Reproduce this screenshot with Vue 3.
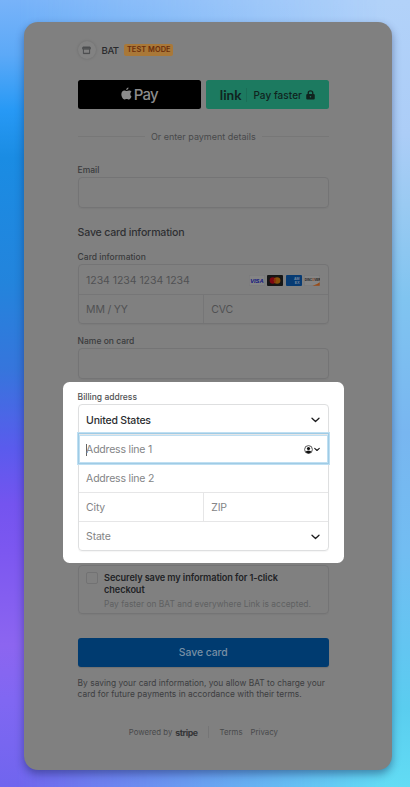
<script setup>
const cards = ['visa', 'mastercard', 'amex', 'discover']
</script>

<template>
  <div class="page">
    <main class="sheet">
      <header class="merchant">
        <span class="avatar">
          <svg width="9" height="9" viewBox="0 0 9 9"><path d="M.9 1h7.200l.2 2.100H.7zM1.400 3.200v4.400h6.200V3.200" fill="none" stroke="#464749" stroke-width=".9" stroke-linejoin="round" /><path d="M.9 1h7.200v1.700H.9zM1.500 6.700h6v1h-6z" fill="#4c4d4f" /></svg>
        </span>
        <span class="name">BAT</span>
        <span class="badge">TEST MODE</span>
      </header>

      <div class="wallets">
        <button class="wallet apple">
          <svg width="11" height="13" viewBox="0 0 22 26"><path d="M15 1c.2 2.700-2 5.200-4.600 5.100C10.100 3.600 12.500 1.200 15 1zM18.700 14c0-2.300 1.200-3.700 2.500-4.500-1.200-1.800-3.200-2.500-5-2.500-2 0-3.600 1.100-4.700 1.100S8.600 7.100 6.900 7.100C3.400 7.200.7 10 .7 14.300.7 19 4 24.800 6.900 24.800c1.500 0 2.400-1 4.400-1s2.800 1 4.300 1c2.500 0 4.500-3.500 5.400-6-1.500-.7-2.300-2.500-2.300-4.800z" fill="#8c8c8c" /></svg>
          <span>Pay</span>
        </button>
        <button class="wallet link">
          <span class="link-logo">link</span>
          <span class="link-rule"></span>
          <span class="faster">Pay faster</span>
          <svg width="9" height="10" viewBox="0 0 8 10" preserveAspectRatio="none"><path d="M2 4.200V2.800a2 2 0 0 1 4 0v1.400" fill="none" stroke="#10231e" stroke-width="1.200" /><rect x=".2" y="4" width="7.600" height="5.600" rx="1" fill="#10231e" /><circle cx="4" cy="6.700" r=".7" fill="#1c7a60" /></svg>
        </button>
      </div>

      <div class="divider"><span>Or enter payment details</span></div>

      <label class="label email-label">Email</label>
      <div class="box single"></div>

      <h2>Save card information</h2>
      <label class="label">Card information</label>
      <div class="box">
        <div class="row">
          <span class="number">1234 1234 1234 1234</span>
          <span class="brands">
            <svg v-for="card in cards" :key="card" width="16" height="11" viewBox="0 0 16 11">
              <template v-if="card === 'visa'">
                <rect x=".3" y=".3" width="15.400" height="10.400" rx="1" fill="#858585" stroke="#767678" stroke-width=".5" />
                <text x="7.900" y="7.700" text-anchor="middle" class="visa">VISA</text>
              </template>
              <template v-else-if="card === 'mastercard'">
                <rect width="16" height="11" rx="1" fill="#151515" />
                <circle cx="5.900" cy="5.500" r="3.300" fill="#7d0711" />
                <circle cx="10.100" cy="5.500" r="3.300" fill="#865009" />
                <path d="M8 2.950a3.300 3.300 0 0 1 0 5.100a3.300 3.300 0 0 1 0-5.100z" fill="#8a3208" />
              </template>
              <template v-else-if="card === 'amex'">
                <rect width="16" height="11" rx="1" fill="#073b73" />
                <text x="8" y="4.700" class="amex">AM</text>
                <text x="8.800" y="9.300" class="amex">EX</text>
              </template>
              <template v-else>
                <rect x=".3" y=".3" width="15.400" height="10.400" rx="1" fill="#858585" stroke="#767678" stroke-width=".5" />
                <path d="M15.700 7.300V10.700H8.500Q13 9.800 15.700 7.300z" fill="#9a4b16" />
                <text x=".7" y="6.300" class="discover">DISC<tspan fill="#984715">O</tspan>VER</text>
              </template>
            </svg>
          </span>
        </div>
        <div class="row split"><span>MM / YY</span><span>CVC</span></div>
      </div>

      <label class="label name-label">Name on card</label>
      <div class="box single"></div>

      <section class="spotlight">
        <label class="label">Billing address</label>
        <div class="box">
          <div class="row country">
            <span>United States</span>
            <svg class="chev" width="9" height="6" viewBox="0 0 9 6"><path d="M1 1.200 4.500 4.500 8 1.200" /></svg>
          </div>
          <div class="row focused">
            <span class="caret"></span><span>Address line 1</span>
            <span class="autofill">
              <svg width="9" height="9" viewBox="0 0 9 9"><circle cx="4.500" cy="4.500" r="3.900" fill="none" stroke="#444" stroke-width=".9" /><circle cx="4.500" cy="3.500" r="1.600" fill="#111" /><path d="M1.600 7.100Q2 5.500 4.500 5.500t2.900 1.600Q6 8.500 4.500 8.500T1.600 7.100z" fill="#111" /></svg>
              <svg class="chev small" width="6" height="5" viewBox="0 0 6 5"><path d="M.7 1.300 3 3.500 5.300 1.300" /></svg>
            </span>
          </div>
          <div class="row"><span>Address line 2</span></div>
          <div class="row split"><span>City</span><span>ZIP</span></div>
          <div class="row">
            <span>State</span>
            <svg class="chev" width="9" height="6" viewBox="0 0 9 6"><path d="M1 1.200 4.500 4.500 8 1.200" /></svg>
          </div>
        </div>
      </section>

      <div class="box save">
        <span class="check"></span>
        <div>
          <strong>Securely save my information for 1-click<br>checkout</strong>
          <p>Pay faster on BAT and everywhere Link is accepted.</p>
        </div>
      </div>

      <button class="submit">Save card</button>
      <p class="terms">By saving your card information, you allow BAT to charge your<br>card for future payments in accordance with their terms.</p>

      <footer>
        <span>Powered by</span><b>stripe</b><i></i><span>Terms</span><span class="privacy">Privacy</span>
      </footer>
    </main>
  </div>
</template>

<style>
body { margin: 0; }
</style>

<style scoped>
* { box-sizing: border-box; }
.page {
  position: relative;
  width: 410px;
  height: 787px;
  padding: 22px 18px 17px 24px;
  overflow: hidden;
  font-family: Inter, "Liberation Sans", sans-serif;
  background: linear-gradient(#78b3f9 0, #5ca9f7 7%, #2799f5 14%, #1a8ce3 20%, #2384dc 36%, #3675dc 47%, #5a5bed 57%, #7454ef 64%, #7c57f0 70%, #8c65f0 82%, #8067f2 89%, #7065ee 100%);
}
.page::before {
  content: "";
  position: absolute;
  inset: 0;
  background: linear-gradient(#b2d2f9 0, #accdf7 17%, #9acaf2 26%, #80c4f0 38%, #78b6f0 55%, #72bdf2 70%, #62c6f1 83%, #5acdef 90%, #62dcf4 100%);
  -webkit-mask-image: linear-gradient(90deg, transparent 4%, #000 94%);
  mask-image: linear-gradient(90deg, transparent 4%, #000 94%);
}
.sheet {
  position: relative;
  width: 368px;
  height: 748px;
  padding: 20px 63px 0 53.600px;
  border-radius: 14px;
  background: #808080;
  box-shadow: 0 4px 9px rgba(15, 25, 70, .42);
  display: flex;
  flex-direction: column;
}
.merchant { display: flex; align-items: center; height: 16px; }
.avatar {
  display: flex; align-items: center; justify-content: center;
  width: 18px; height: 18px; border-radius: 50%;
  background: #828282; box-shadow: 0 0 3px rgba(0, 0, 0, .17);
}
.name { margin-left: 6px; width: 17px; font-size: 9.600px; font-weight: 500; letter-spacing: -.5px; color: #292a2d; }
.badge {
  margin-left: 5.700px; width: 49px; height: 12px; line-height: 12px; border-radius: 2px;
  background: #a97838; color: #6b2e0c; text-align: center;
  font-size: 7.400px; font-weight: 600; letter-spacing: .05px; white-space: nowrap;
}
button { border: 0; padding: 0; font-family: inherit; }
.wallets { display: flex; gap: 5px; margin-top: 22px; height: 29px; }
.wallet { flex: 1; display: flex; align-items: center; justify-content: center; border-radius: 2.500px; }
.apple { background: #000; color: #8c8c8c; font-size: 15px; font-weight: 500; letter-spacing: -.8px; gap: 2px; }
.apple svg { margin-top: -3px; }
.link { background: #1c7a60; color: #10231e; font-size: 10px; font-weight: 500; }
.link-logo { font-family: Lato, sans-serif; font-size: 13.500px; font-weight: 700; }
.link-rule { width: 1px; height: 14px; margin: 0 6px 0 5px; background: #1a6d57; }
.faster { margin-right: 4px; letter-spacing: .05px; }
.divider { display: flex; align-items: center; gap: 6px; margin-top: 20px; height: 14px; font-size: 9px; color: #48494b; white-space: nowrap; }
.divider::before, .divider::after { content: ""; flex: 1; height: 1px; background: #777; }
.label { display: block; height: 14px; line-height: 14px; font-size: 8.500px; font-weight: 500; color: #3a3b3d; }
.email-label { margin-top: 20px; }
.box { border: 1px solid #747475; border-radius: 4px; box-shadow: 0 1px 1px rgba(0, 0, 0, .04); }
.single { height: 31px; flex: none; }
h2 { margin: 18px 0 0; height: 14px; line-height: 14px; font-size: 10.600px; font-weight: 500; letter-spacing: -.2px; color: #2f3033; }
h2 + .label { margin-top: 10px; }
.row { display: flex; align-items: center; height: 29px; padding: 1px 8px 0 7.500px; font-size: 10.500px; color: #505153; letter-spacing: -.2px; }
.row .number { letter-spacing: -.05px; }
.brands { display: flex; gap: 2.500px; margin-left: auto; }
.row + .row { border-top: 1px solid #767677; }
.visa { font: italic 700 5.800px "Liberation Sans", sans-serif; fill: #101580; letter-spacing: 0; }
.amex { font: 700 3.600px "Liberation Sans", sans-serif; fill: #76899e; letter-spacing: 0; }
.discover { font: 700 3.200px "Liberation Sans", sans-serif; fill: #222; letter-spacing: -.1px; }
.row.split { padding: 0; }
.split span { flex: 1; padding-left: 7.500px; line-height: 30px; height: 28px; }
.split span + span { border-left: 1px solid #767677; }
.name-label { margin-top: 10px; }
.spotlight {
  margin: 3px -14.500px 0; padding: 8px 14.500px 12px; height: 181px; flex: none;
  background: #fff; border-radius: 6.500px;
}
.spotlight .label { color: #505153; }
.spotlight .box { border-color: #dedfe0; }
.spotlight .row { color: #838486; }
.spotlight .row + .row, .spotlight .split span + span { border-color: #e6e6e7; }
.spotlight .country { color: #2c2d30; font-weight: 500; }
.chev { margin-left: auto; fill: none; stroke: #1c1c1e; stroke-width: 1.300; stroke-linecap: round; stroke-linejoin: round; }
.chev.small { stroke-width: 1.100; }
.spotlight .focused { position: relative; border-color: transparent; box-shadow: 0 0 0 1px #9fcbe5, 0 0 0 2px #bfdff2, inset 0 0 0 1px #bfdff2; }
.caret { width: 1px; height: 12px; margin-left: -.5px; margin-right: -.5px; background: #666; }
.autofill { display: flex; align-items: center; gap: 1px; margin-left: auto; }
.save { display: flex; flex: none; height: 49px; margin-top: 2px; padding: 6px 7px 0; }
.check { flex: none; width: 12px; height: 12px; margin-right: 6.500px; border: 1px solid #727273; border-radius: 2px; }
.save strong { display: block; font-size: 9.200px; line-height: 12px; font-weight: 600; letter-spacing: -.1px; color: #222326; white-space: nowrap; }
.save p { margin: 2px 0 0; font-size: 8.400px; line-height: 12px; letter-spacing: .02px; color: #5f6062; white-space: nowrap; }
.submit { flex: none; height: 29px; margin-top: 24px; border-radius: 3px; background: #003b70; color: #7890a5; font-size: 10.400px; font-weight: 500; letter-spacing: -.05px; box-shadow: 0 1px 1px rgba(0, 0, 0, .12); }
.terms { margin: 11px 0 0; font-size: 8.400px; line-height: 11px; letter-spacing: .02px; color: #3d3e40; white-space: nowrap; }
footer { display: flex; align-items: center; justify-content: center; margin-top: 25px; height: 14px; font-size: 7.800px; color: #48494b; }
footer b { margin-left: 3px; font-size: 8.800px; letter-spacing: -.45px; color: #343537; }
footer i { width: 1px; height: 12px; margin: 0 10.500px; background: #757576; }
footer .privacy { margin-left: 8px; }
</style>
